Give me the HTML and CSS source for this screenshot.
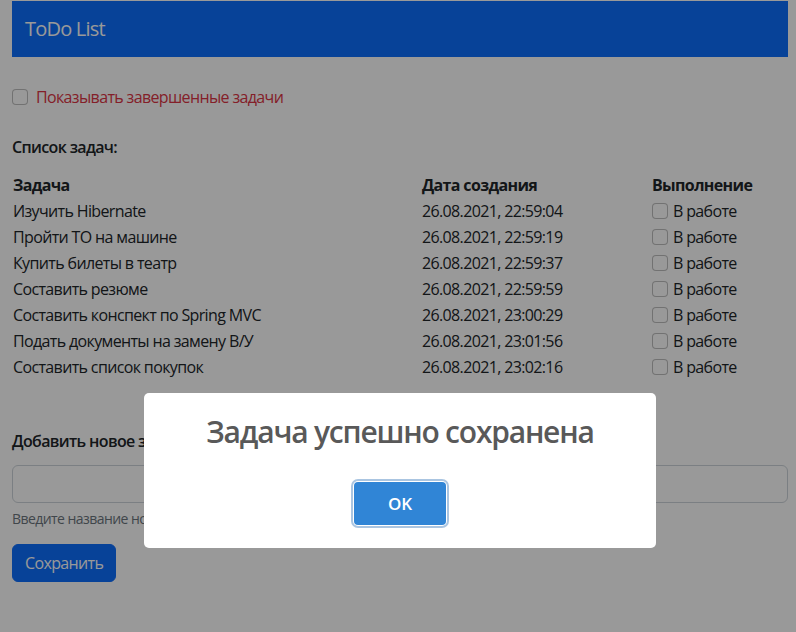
FILE: index.html
```html
<!DOCTYPE html>
<html lang="ru">
<head>
<meta charset="utf-8">
<title>ToDo List</title>
<link rel="stylesheet" href="styles.css">
</head>
<body>
<div class="page">
  <header class="navbar"><span class="brand">ToDo List</span></header>

  <label class="form-check show-done">
    <span class="check"></span>
    <span class="danger">Показывать завершенные задачи</span>
  </label>

  <div class="section-title">Список задач:</div>

  <table class="tasks">
    <colgroup><col class="c1"><col class="c2"><col class="c3"></colgroup>
    <thead>
      <tr><th>Задача</th><th>Дата создания</th><th>Выполнение</th></tr>
    </thead>
    <tbody>
      <tr><td>Изучить Hibernate</td><td>26.08.2021, 22:59:04</td><td><span class="cell-check"><span class="check"></span>В работе</span></td></tr>
      <tr><td>Пройти ТО на машине</td><td>26.08.2021, 22:59:19</td><td><span class="cell-check"><span class="check"></span>В работе</span></td></tr>
      <tr><td>Купить билеты в театр</td><td>26.08.2021, 22:59:37</td><td><span class="cell-check"><span class="check"></span>В работе</span></td></tr>
      <tr><td>Составить резюме</td><td>26.08.2021, 22:59:59</td><td><span class="cell-check"><span class="check"></span>В работе</span></td></tr>
      <tr><td>Составить конспект по Spring MVC</td><td>26.08.2021, 23:00:29</td><td><span class="cell-check"><span class="check"></span>В работе</span></td></tr>
      <tr><td>Подать документы на замену В/У</td><td>26.08.2021, 23:01:56</td><td><span class="cell-check"><span class="check"></span>В работе</span></td></tr>
      <tr><td>Составить список покупок</td><td>26.08.2021, 23:02:16</td><td><span class="cell-check"><span class="check"></span>В работе</span></td></tr>
    </tbody>
  </table>

  <div class="section-title add-title">Добавить новое задание:</div>
  <div class="input"></div>
  <div class="form-text">Введите название нового задания</div>
  <button class="btn-primary">Сохранить</button>
</div>

<div class="overlay">
  <div class="popup">
    <h2 class="popup-title">Задача успешно сохранена</h2>
    <div class="actions"><button class="confirm">OK</button></div>
  </div>
</div>
</body>
</html>
```
FILE: styles.css
```css
* { box-sizing: border-box; }
html, body { margin: 0; padding: 0; }
body {
  font-family: "Open Sans", "Noto Sans", sans-serif;
  font-size: 16px;
  line-height: 1.5;
  letter-spacing: -0.04em;
  color: #212529;
  background: #fff;
  height: 632px;
  overflow: hidden;
}
.page {
  padding: 1px 8px 0 12px;
  display: flex;
  flex-direction: column;
  align-items: flex-start;
}
.navbar {
  align-self: stretch;
  height: 56px;
  background: #0d6efd;
  display: flex;
  align-items: center;
  padding-left: 13px;
}
.brand { color: #fff; font-size: 20px; letter-spacing: -0.04em; }
.form-check {
  margin-top: 28px;
  display: flex;
  align-items: center;
  gap: 8px;
}
.check {
  display: inline-block;
  width: 16px;
  height: 16px;
  border: 1px solid rgba(0,0,0,.25);
  border-radius: 4px;
  background: #fff;
  flex: none;
}
.danger { color: #dc3545; }
.section-title {
  margin-top: 26px;
  font-weight: 600;
}
.tasks {
  margin-top: 13px;
  width: 776px;
  border-collapse: collapse;
  table-layout: fixed;
}
.c1 { width: 409px; }
.c2 { width: 230px; }
.tasks th, .tasks td {
  text-align: left;
  padding: 1px 1px;
  font-weight: 400;
  white-space: nowrap;
}
.tasks th { font-weight: 700; }
.cell-check { display: flex; align-items: center; gap: 5px; }
.add-title { margin-top: 49px; }
.input {
  margin-top: 12px;
  align-self: stretch;
  height: 38px;
  border: 1px solid #ced4da;
  border-radius: 6px;
  background: #fff;
}
.form-text {
  margin-top: 5px;
  font-size: 14px;
  letter-spacing: -0.04em;
  color: #6c757d;
}
.btn-primary {
  margin-top: 15px;
  font: inherit;
  letter-spacing: inherit;
  color: #fff;
  background: #0d6efd;
  border: 1px solid #0d6efd;
  border-radius: 6px;
  height: 38px;
  padding: 0 12px;
}
.overlay {
  position: fixed;
  inset: 0;
  background: rgba(0,0,0,.4);
  display: flex;
  justify-content: center;
  align-items: flex-start;
  padding-top: 393px;
  padding-left: 4px;
}
.popup {
  width: 512px;
  height: 155px;
  background: #fff;
  border-radius: 5px;
  padding: 20px;
  display: flex;
  flex-direction: column;
  align-items: center;
}
.popup-title {
  margin: 0;
  font-size: 30px;
  line-height: 38px;
  font-weight: 600;
  letter-spacing: -0.04em;
  color: #595959;
}
.actions { margin-top: 31px; }
.confirm {
  width: 92px;
  height: 43px;
  border: 0;
  border-radius: 4px;
  background: #3085d6;
  color: #fff;
  font-family: inherit;
  letter-spacing: 0;
  font-size: 17px;
  font-weight: 600;
  box-shadow: 0 0 0 1px #fff, 0 0 0 3px rgba(100,150,200,.55);
}
```
